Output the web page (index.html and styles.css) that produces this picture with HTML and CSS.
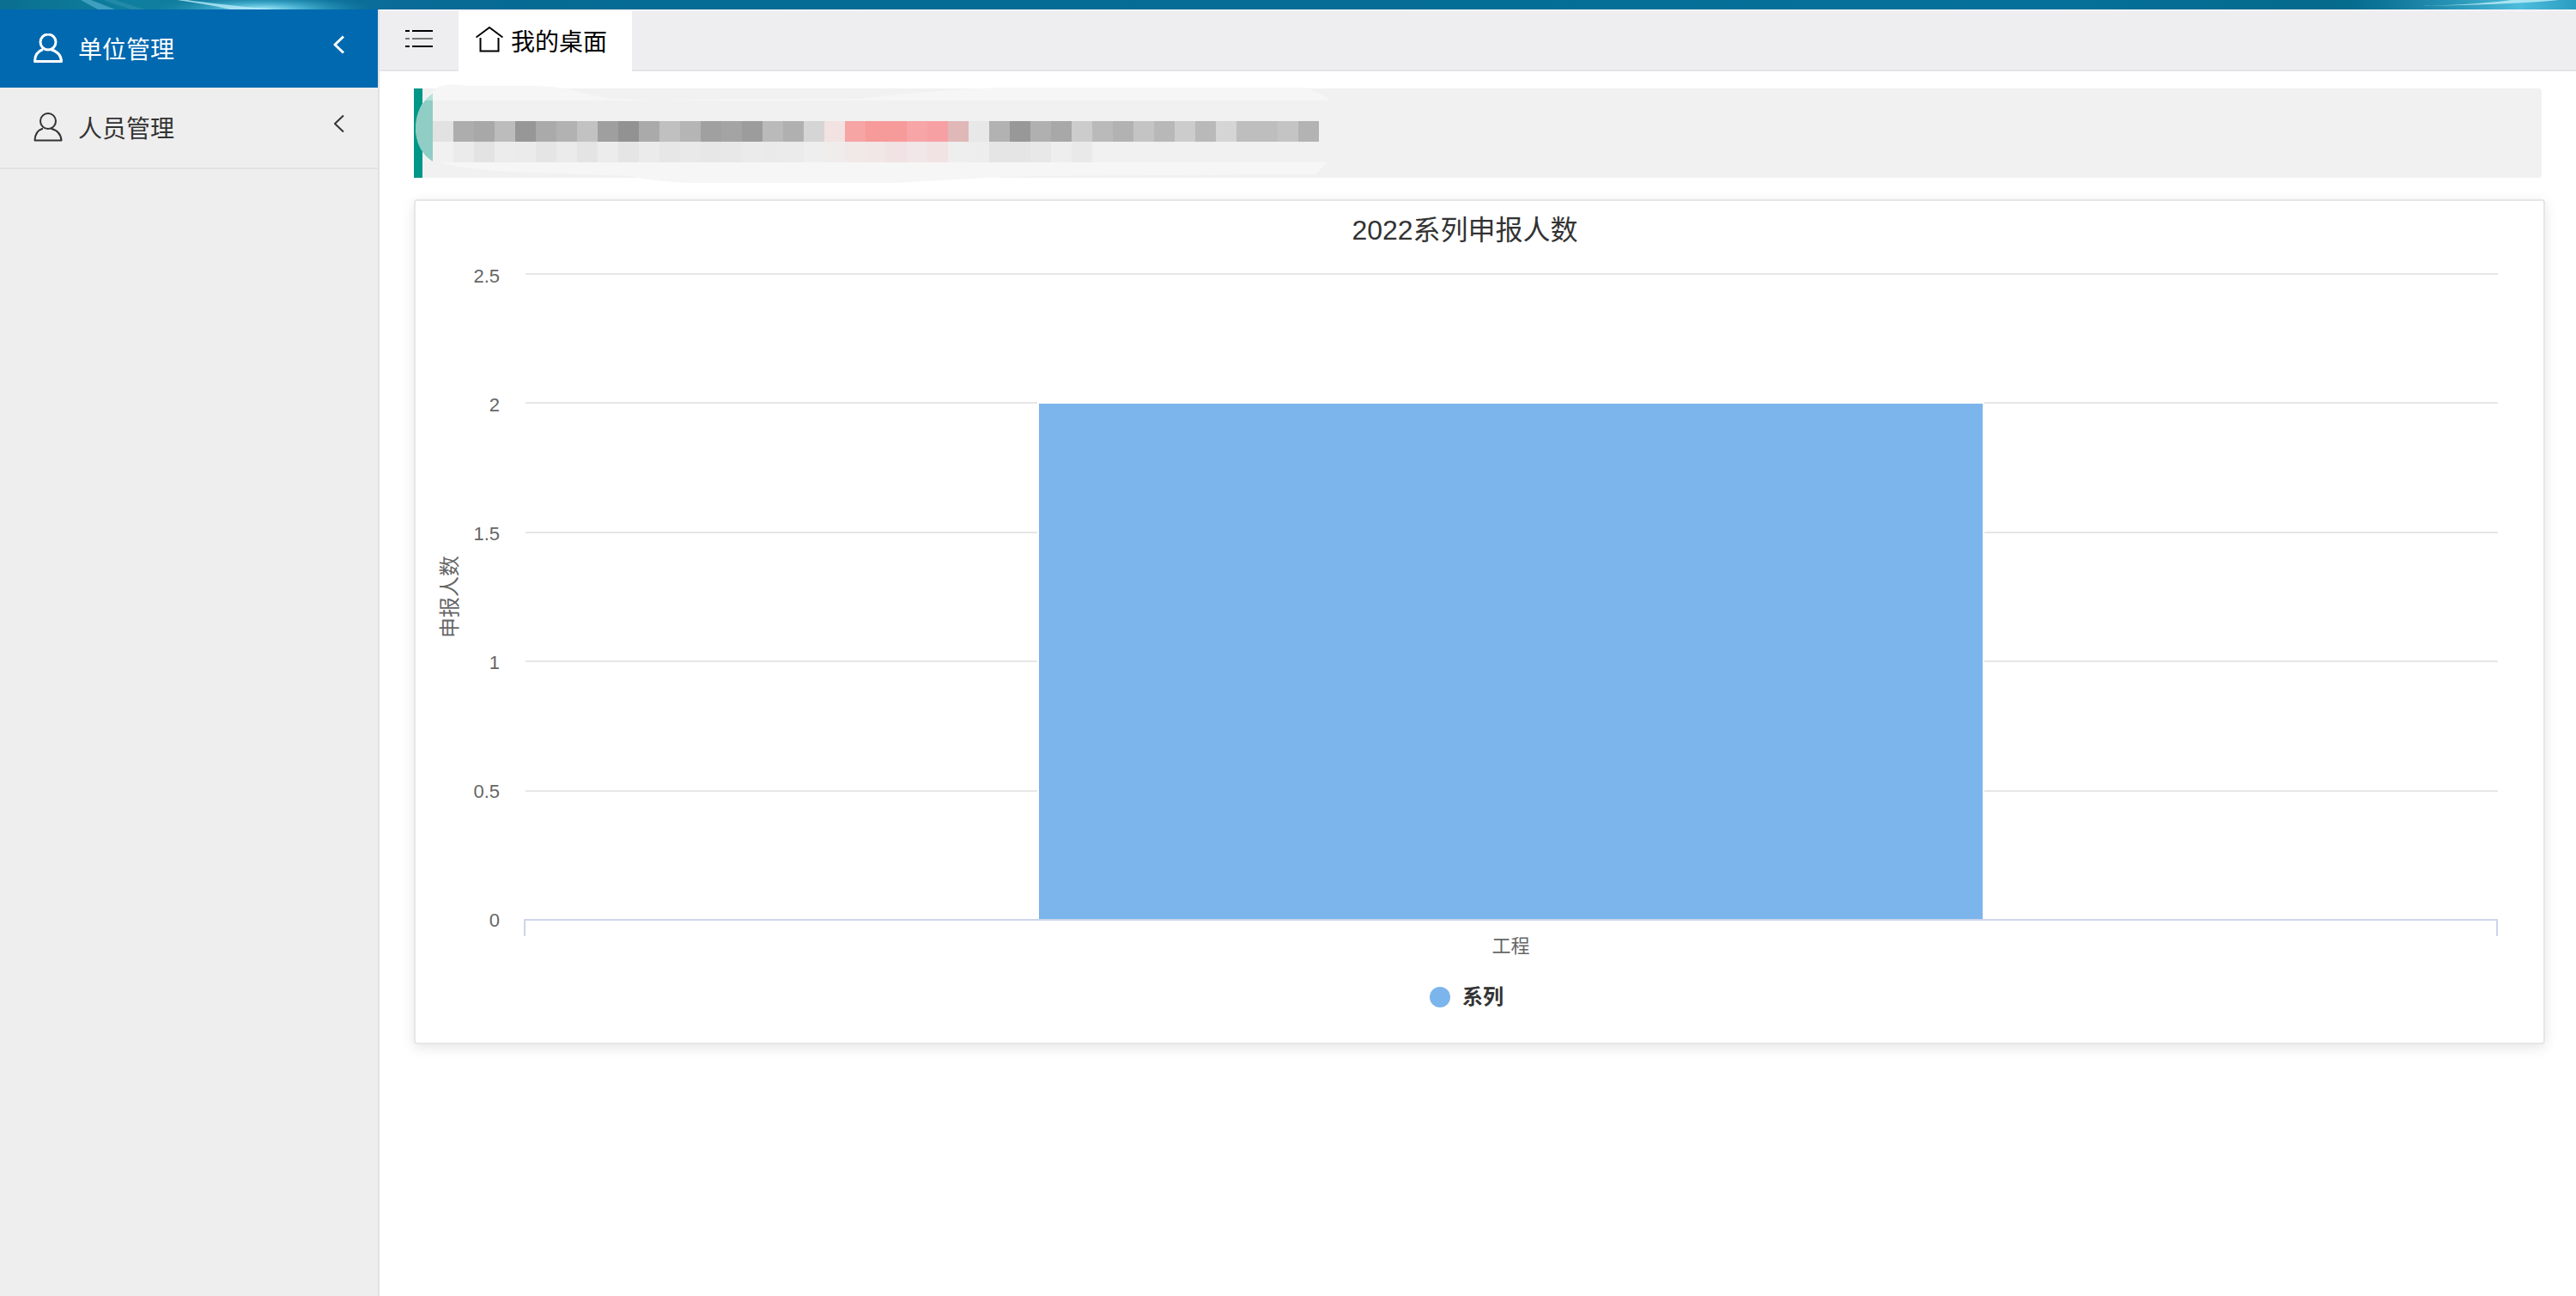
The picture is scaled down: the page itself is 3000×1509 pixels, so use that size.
FILE: index.html
```html
<!DOCTYPE html>
<html lang="zh-CN">
<head>
  <meta charset="UTF-8" />
  <meta name="viewport" content="width=device-width, initial-scale=1.0" />
  <title>我的桌面</title>
  <link rel="stylesheet" href="styles.css">
</head>
<body>
  <header class="topbar">
    <svg class="glow" width="580" height="11" viewBox="0 0 580 11" aria-hidden="true">
      <defs>
        <radialGradient id="glow-left">
          <stop offset="0" stop-color="#a5ecfb" />
          <stop offset="0.4" stop-color="#4fb9d8" stop-opacity="0.8" />
          <stop offset="1" stop-color="#1787a8" stop-opacity="0" />
        </radialGradient>
      </defs>
      <ellipse cx="305" cy="11" rx="130" ry="18" fill="url(#glow-left)" />
      <path d="M94 0h12l28 11h-20z" fill="#3f9fbf" />
      <path d="M120 0h14l34 11h-16z" fill="#2289a8" />
      <path d="M206 0h12q34 5 100 11h-50q-20-5-62-11z" fill="#b5eaf7" opacity="0.8" />
    </svg>
    <svg class="glow" width="260" height="11" viewBox="0 0 260 11" aria-hidden="true">
      <defs>
        <linearGradient id="glow-right">
          <stop offset="0" stop-color="#2c93b5" stop-opacity="0" />
          <stop offset="0.75" stop-color="#4dbddd" />
          <stop offset="1" stop-color="#2a9dc0" />
        </linearGradient>
      </defs>
      <rect width="260" height="11" fill="url(#glow-right)" />
      <path d="M60 7q70 0 125-7h55q-60 6-180 7z" fill="#c3eff8" opacity="0.8" />
    </svg>
  </header>

  <div class="layout">
    <nav class="sidebar">
      <a class="nav-item active" href="#unit">
        <svg class="icon" width="34" height="34" viewBox="0 0 34 34" aria-hidden="true">
          <circle cx="17" cy="10" r="9" />
          <path d="M11 18.500Q1.500 22 1.500 32.500H32.500Q32 22 20 18.500" />
        </svg>
        <span>单位管理</span>
        <svg class="arrow" width="14" height="22" viewBox="0 0 14 22" aria-hidden="true"><path d="M12 1.500L2 11l10 9.500" /></svg>
      </a>
      <a class="nav-item" href="#people">
        <svg class="icon" width="34" height="34" viewBox="0 0 34 34" aria-hidden="true">
          <circle cx="17" cy="10" r="9" />
          <path d="M11 18.500Q1.500 22 1.500 32.500H32.500Q32 22 20 18.500" />
        </svg>
        <span>人员管理</span>
        <svg class="arrow" width="14" height="22" viewBox="0 0 14 22" aria-hidden="true"><path d="M12 1.500L2 11l10 9.500" /></svg>
      </a>
    </nav>

    <main class="main">
      <div class="tabs">
        <button class="toggle" type="button" aria-label="菜单">
          <svg width="32" height="20" viewBox="0 0 32 20" aria-hidden="true">
            <path d="M0 1h5M8 1h24M0 19h5M8 19h24" />
            <path class="mid" d="M0 10h5M8 10h24" />
          </svg>
        </button>
        <a class="tab" href="#desktop">
          <svg class="home" width="32" height="30" viewBox="0 0 32 30" aria-hidden="true">
            <path d="M0.500 12.500L16 1l15.500 11.500M5.500 13v15.500h21V13" />
          </svg>
          <span>我的桌面</span>
        </a>
      </div>

      <div class="content">
        <div class="notice">
          <svg class="mosaic" width="1080" height="120" viewBox="0 0 1080 120" aria-hidden="true">
            <path d="M2 56Q4 24 24 10Q34 0 62 5L130 5Q170 4 200 14T330 21L520 20Q600 10 680 7L1040 7L1066 20V92L1050 108L720 110Q620 114 560 118L320 118Q280 116 250 110L140 106Q60 104 24 92Q4 80 2 56z" fill="#f6f6f6" />
            <path d="M22 14Q2 28 2 54Q2 80 22 93z" fill="#8fcdc5" />
            <path d="M22 14V22H13z" fill="#b5e1d8" />
            <path d="M22 22H1066V94H22z" fill="#f1f1f1" />
            <g id="cells" shape-rendering="crispEdges"></g>
          </svg>
        </div>

        <section class="card">
          <div class="chart">
            <h2>2022系列申报人数</h2>
            <div class="chart-body">
              <div class="axis-title">申报人数</div>
              <div class="y-labels">
                <span>2.5</span>
                <span>2</span>
                <span>1.5</span>
                <span>1</span>
                <span>0.5</span>
                <span>0</span>
              </div>
              <div class="plot">
                <div class="grid">
                  <i></i><i></i><i></i><i></i><i></i>
                </div>
                <div class="bars">
                  <div class="bar" style="height: 80%"></div>
                </div>
              </div>
              <div class="x-labels"><span>工程</span></div>
            </div>
            <div class="legend"><i class="dot"></i><span>系列</span></div>
          </div>
        </section>
      </div>
    </main>
  </div>

  <script src="script.js"></script>
</body>
</html>
```

FILE: styles.css
```css
* {
  box-sizing: border-box;
}
body {
  margin: 0;
  min-height: 100vh;
  display: flex;
  flex-direction: column;
  font-family: "Liberation Sans", "Noto Sans CJK SC", sans-serif;
  background: #fff;
  color: #333;
}
a {
  color: inherit;
  text-decoration: none;
}
svg {
  display: block;
  flex: none;
}

/* top strip */
.topbar {
  height: 11px;
  display: flex;
  justify-content: space-between;
  overflow: hidden;
  background: linear-gradient(to right, #0a6f90 0, #107f9f 160px, #0a6b98 460px, #056b93 620px, #05709a 80%, #056a8c 90%, #0a7c9c 100%);
}

.layout {
  flex: 1;
  display: flex;
}

/* sidebar */
.sidebar {
  width: 442px;
  flex: none;
  background: #eee;
  border-right: 2px solid #e2e2e2;
}
.nav-item {
  display: flex;
  align-items: center;
  height: 95px;
  padding: 0 38px 0 39px;
  border-bottom: 2px solid #e2e2e2;
  font-size: 28px;
  line-height: 40px;
}
.nav-item.active {
  height: 91px;
  border-bottom: 0;
  background: #0069b0;
  color: #fff;
}
.nav-item span {
  margin-left: 18px;
  padding-top: 4px;
}
.icon, .arrow {
  fill: none;
  stroke: currentColor;
  stroke-width: 2;
  stroke-linejoin: round;
}
.active .icon, .active .arrow {
  stroke-width: 3;
}
.icon {
  margin-bottom: 2px;
}
.arrow {
  margin: 0 0 10px auto;
}

/* tabs */
.main {
  flex: 1;
  min-width: 0;
}
.tabs {
  display: flex;
  height: 72px;
  background: #eeeef0;
  border-top: 2px solid #f3f3f7;
  border-bottom: 2px solid #e4e4e6;
}
.tabs svg {
  fill: none;
  stroke: #000;
  stroke-width: 2;
}
.tabs .mid {
  stroke: #777;
}
.toggle {
  width: 92px;
  padding: 0 0 4px 30px;
  border: 0;
  background: none;
  cursor: pointer;
}
.tab {
  display: flex;
  align-items: center;
  gap: 9px;
  height: 70px;
  padding: 0 29px 2px 20px;
  background: #fff;
  color: #000;
  font-size: 28px;
}
.home {
  margin-bottom: 2px;
}

.content {
  padding: 20px 36px 40px 40px;
}

/* notice */
.notice {
  position: relative;
  height: 104px;
  margin-right: 4px;
  border-left: 10px solid #009688;
  border-radius: 0 4px 4px 0;
  background: #f1f1f1;
}
.mosaic {
  position: absolute;
  top: -8px;
  left: -10px;
}

/* chart */
.card {
  margin-top: 25px;
  padding-right: 34px;
  border: 2px solid #e6e6e6;
  border-radius: 4px;
  box-shadow: 0 4px 16px rgba(0, 0, 0, 0.1);
}
.chart {
  padding: 16px 0 36px;
}
.chart h2 {
  margin: 0 0 32px;
  font-size: 32px;
  font-weight: normal;
  line-height: 36px;
  text-align: center;
}
.chart-body {
  display: grid;
  grid-template-columns: 54px 44px 1fr;
  grid-template-rows: 754px auto;
  padding-right: 19px;
}
.axis-title {
  align-self: center;
  justify-self: end;
  margin-right: 2px;
  writing-mode: vertical-rl;
  text-orientation: sideways;
  transform: rotate(180deg);
  font-size: 24px;
  line-height: 24px;
  color: #666;
}
.y-labels {
  display: flex;
  flex-direction: column;
  justify-content: space-between;
  margin: -8px 0 -12px;
  text-align: right;
  font-size: 22px;
  line-height: 24px;
  color: #666;
}
.plot {
  display: grid;
  margin-left: 28px;
  border-bottom: 2px solid #ccd6eb;
}
.grid, .bars {
  grid-area: 1 / 1;
}
.grid {
  display: flex;
  flex-direction: column;
}
.grid i {
  flex: 1;
  margin-left: 2px;
  border-top: 2px solid #e6e6e6;
}
.bars {
  display: flex;
  align-items: flex-end;
  justify-content: center;
}
.bar {
  width: 48%;
  border: 2px solid #fff;
  border-bottom: 0;
  background: #7cb5ec;
}
.x-labels {
  grid-column: 3;
  margin-left: 28px;
  text-align: center;
  font-size: 22px;
  line-height: 24px;
  color: #666;
}
.x-labels::before {
  content: "";
  display: block;
  height: 18px;
  border: solid #ccd6eb;
  border-width: 0 2px;
}
.legend {
  display: flex;
  align-items: center;
  justify-content: center;
  gap: 14px;
  margin-top: 30px;
  padding-left: 4px;
  font-size: 24px;
  font-weight: bold;
  line-height: 34px;
}
.dot {
  width: 24px;
  height: 24px;
  border-radius: 50%;
  background: #7cb5ec;
}
```

FILE: script.js
```js
// one colour per 24px cell, left to right
const rows = [
  ['#e2e2e2', '#adadad', '#a8a8a8', '#bcbcbc', '#979797', '#aaa', '#b2b2b2', '#c2c2c2', '#9f9f9f', '#929292',
   '#aaa', '#c0c0c0', '#b5b5b5', '#a0a0a0', '#a4a4a4', '#9c9c9c', '#bababa', '#b0b0b0', '#d5d5d5', '#f2e2e2',
   '#f7a4a4', '#f79a9a', '#f79a9a', '#f7a5a7', '#f7a0a3', '#e0b8b8', '#e8e8e8', '#b2b2b2', '#989898', '#b0b0b0',
   '#a8a8a8', '#ccc', '#bababa', '#b2b2b2', '#c4c4c4', '#b8b8b8', '#ccc', '#b9b9b9', '#d5d5d5', '#bebebe',
   '#bebebe', '#c4c4c4', '#b3b3b3'],
  ['#f1f1f1', '#ebebeb', '#e3e3e3', '#ececec', '#ebebeb', '#e5e5e5', '#ebebeb', '#e4e4e4', '#ececec', '#e5e5e5',
   '#ebebeb', '#e7e7e7', '#e9e9e9', '#e7e7e7', '#e8e8e8', '#ebebeb', '#eaeaea', '#ebebeb', '#eee', '#f1ecec',
   '#f1e9e8', '#f1e7e6', '#f1e2e3', '#f1e7e8', '#f1e3e4', '#eee', '#ededed', '#e5e5e5', '#e5e5e5', '#e8e8e8',
   '#eee', '#e9e9e9']
];

const cells = document.getElementById('cells');
rows.forEach((row, y) => {
  row.forEach((color, x) => {
    const rect = document.createElementNS('http://www.w3.org/2000/svg', 'rect');
    rect.setAttribute('x', 22 + x * 24);
    rect.setAttribute('y', 46 + y * 24);
    rect.setAttribute('width', 24);
    rect.setAttribute('height', 24);
    rect.setAttribute('fill', color);
    cells.appendChild(rect);
  });
});
```
